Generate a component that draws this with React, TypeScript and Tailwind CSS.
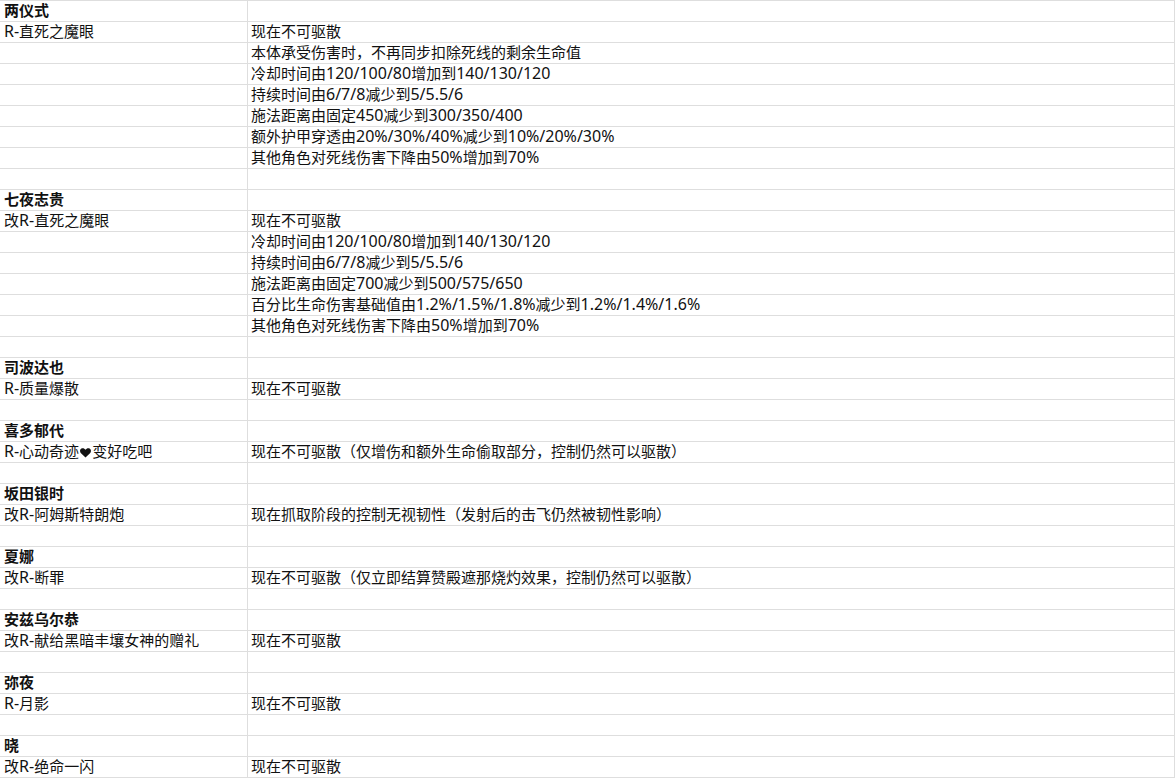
const ROWS: { a?: string; b?: string; head?: boolean }[] = [
  { a: '两仪式', head: true },
  { a: 'R-直死之魔眼', b: '现在不可驱散' },
  { b: '本体承受伤害时，不再同步扣除死线的剩余生命值' },
  { b: '冷却时间由120/100/80增加到140/130/120' },
  { b: '持续时间由6/7/8减少到5/5.5/6' },
  { b: '施法距离由固定450减少到300/350/400' },
  { b: '额外护甲穿透由20%/30%/40%减少到10%/20%/30%' },
  { b: '其他角色对死线伤害下降由50%增加到70%' },
  {},
  { a: '七夜志贵', head: true },
  { a: '改R-直死之魔眼', b: '现在不可驱散' },
  { b: '冷却时间由120/100/80增加到140/130/120' },
  { b: '持续时间由6/7/8减少到5/5.5/6' },
  { b: '施法距离由固定700减少到500/575/650' },
  { b: '百分比生命伤害基础值由1.2%/1.5%/1.8%减少到1.2%/1.4%/1.6%' },
  { b: '其他角色对死线伤害下降由50%增加到70%' },
  {},
  { a: '司波达也', head: true },
  { a: 'R-质量爆散', b: '现在不可驱散' },
  {},
  { a: '喜多郁代', head: true },
  { a: 'R-心动奇迹❤变好吃吧', b: '现在不可驱散（仅增伤和额外生命偷取部分，控制仍然可以驱散）' },
  {},
  { a: '坂田银时', head: true },
  { a: '改R-阿姆斯特朗炮', b: '现在抓取阶段的控制无视韧性（发射后的击飞仍然被韧性影响）' },
  {},
  { a: '夏娜', head: true },
  { a: '改R-断罪', b: '现在不可驱散（仅立即结算赞殿遮那烧灼效果，控制仍然可以驱散）' },
  {},
  { a: '安兹乌尔恭', head: true },
  { a: '改R-献给黑暗丰壤女神的赠礼', b: '现在不可驱散' },
  {},
  { a: '弥夜', head: true },
  { a: 'R-月影', b: '现在不可驱散' },
  {},
  { a: '晓', head: true },
  { a: '改R-绝命一闪', b: '现在不可驱散' },
];

function Heart() {
  return (
    <svg width="11" height="10" viewBox="0 0 11 10" className="inline-block mx-[1px] align-[-1px]">
      <path d="M5.5 9.6 L1 5.2 C-0.4 3.8 -0.2 1.4 1.4 0.6 C2.9 -0.2 4.6 0.4 5.5 1.8 C6.4 0.4 8.1 -0.2 9.6 0.6 C11.2 1.4 11.4 3.8 10 5.2 Z" fill="#111" />
    </svg>
  );
}

// Latin runs get a slightly larger size so digits match the sheet's wider UI font
function Txt({ s }: { s: string }) {
  const parts = s.split(/([A-Za-z0-9.%/\-]+)/);
  return (
    <>
      {parts.map((p, i) =>
        i % 2 === 1 ? (
          <span key={i} className="text-[16px]">
            {p}
          </span>
        ) : (
          p.split('❤').map((q, j) => (
            <span key={`${i}-${j}`}>
              {j > 0 && <Heart />}
              {q}
            </span>
          ))
        )
      )}
    </>
  );
}

export default function App() {
  return (
    <div
      className="w-[1175px] h-[778px] bg-white text-[15px] text-[#111] overflow-hidden"
      style={{ fontFamily: '"Noto Sans", "Noto Sans CJK SC", sans-serif' }}
    >
      <div className="w-[1175px] border-r border-b border-[#dedede]">
        {ROWS.map((r, i) => (
          <div key={i} className="flex h-[21px] border-t border-[#dedede]">
            <div
              className={`w-[248px] shrink-0 border-r border-[#dedede] pl-[4px] leading-[19px] whitespace-nowrap ${
                r.head ? 'font-bold' : ''
              }`}
            >
              {r.a && <Txt s={r.a} />}
            </div>
            <div className="flex-1 pl-[3px] leading-[19px] whitespace-nowrap">
              {r.b && <Txt s={r.b} />}
            </div>
          </div>
        ))}
      </div>
    </div>
  );
}
